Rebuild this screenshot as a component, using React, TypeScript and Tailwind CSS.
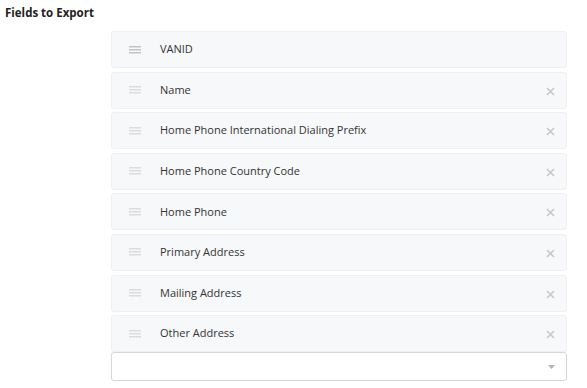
import React from "react";

const fields = [
  { name: "VANID", removable: false },
  { name: "Name", removable: true },
  { name: "Home Phone International Dialing Prefix", removable: true },
  { name: "Home Phone Country Code", removable: true },
  { name: "Home Phone", removable: true },
  { name: "Primary Address", removable: true },
  { name: "Mailing Address", removable: true },
  { name: "Other Address", removable: true },
];

function Handle({ dark }: { dark?: boolean }) {
  return (
    <svg width="12" height="8" viewBox="0 0 12 8" className="shrink-0">
      <g fill={dark ? "#c4c4c4" : "#dcdcdc"}>
        <rect x="0" y="0" width="12" height="1.5" />
        <rect x="0" y="3" width="12" height="1.5" />
        <rect x="0" y="6" width="12" height="1.5" />
      </g>
    </svg>
  );
}

export default function App() {
  return (
    <div
      className="w-[587px] h-[388px] bg-white text-[#333]"
      style={{ fontFamily: "'Open Sans', 'Noto Sans', sans-serif" }}
    >
      <div className="pl-[5px] pt-[4px] text-[11.5px] font-bold text-[#222] leading-[18px]">
        Fields to Export
      </div>
      <div className="ml-[111px] w-[456px] mt-[9px] flex flex-col gap-[3.6px]">
        {fields.map((f, i) => (
          <div
            key={f.name}
            className="h-[37px] flex items-center rounded-[3px] border border-[#eef0f2] bg-[#f7f8fa] pl-[17px] pr-[10px]"
          >
            <Handle dark={i === 0} />
            <span className="ml-[19px] text-[11px] text-[#333] flex-1">{f.name}</span>
            {f.removable && (
              <svg width="9" height="9" viewBox="0 0 9 9" className="mr-[1px] mt-[2px]">
                <path d="M1 1L8 8M8 1L1 8" stroke="#c8c8c8" strokeWidth="1.6" />
              </svg>
            )}
          </div>
        ))}
      </div>
      <div className="ml-[111px] w-[456px] h-[29px] rounded-[3px] border border-[#d6d6d6] bg-white flex items-center justify-end pr-[11px]">
        <svg width="7" height="4" viewBox="0 0 7 4">
          <path d="M0 0H7L3.5 4Z" fill="#b5b5b5" />
        </svg>
      </div>
    </div>
  );
}
